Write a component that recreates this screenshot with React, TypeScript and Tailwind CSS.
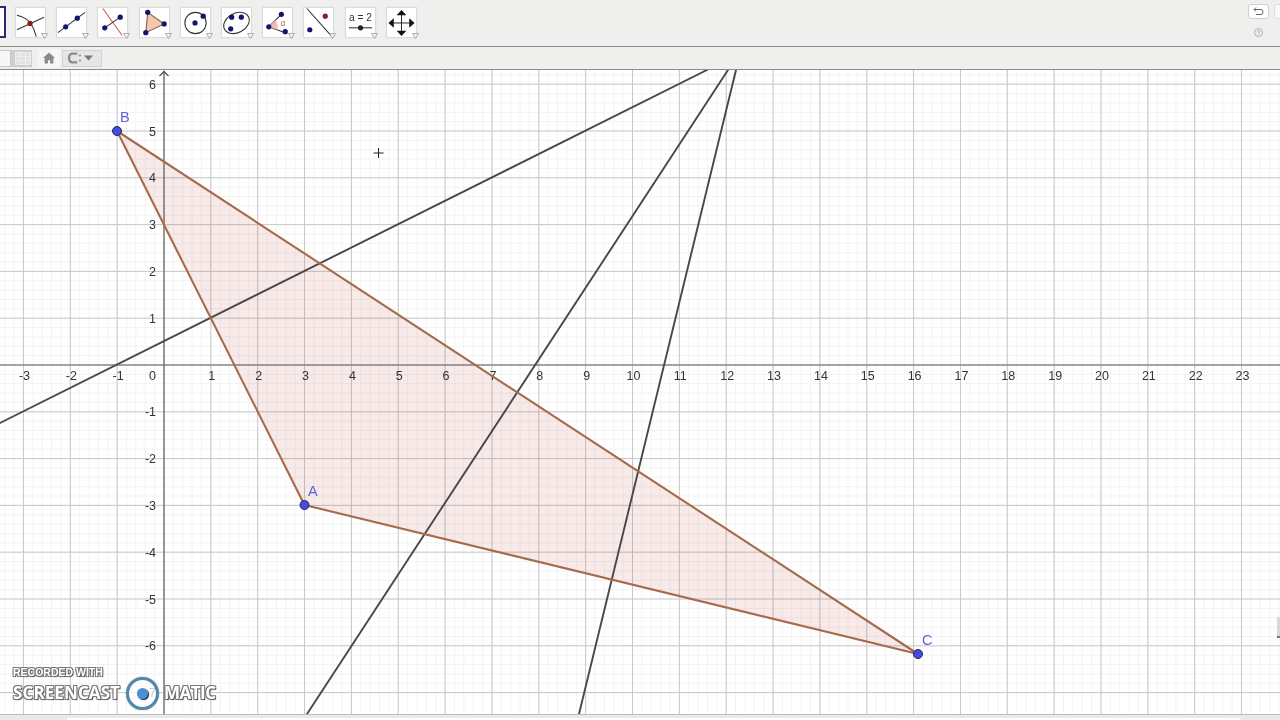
import React from "react";

const UX = 46.85;
const UY = 46.8;
const OX = 164;
const OY = 365;
const range = (a: number, b: number) => Array.from({ length: b - a + 1 }, (_, i) => a + i);
const NAVY = "#14146e";

function Dot({ x, y, c = NAVY, r = 2.7 }: { x: number; y: number; c?: string; r?: number }) {
  return <circle cx={x} cy={y} r={r} fill={c} />;
}

const icons: React.ReactNode[] = [
  <>
    <path d="M1 7 Q10 9 15 15 Q19 21 21 29" stroke="#333" strokeWidth="1.1" fill="none" />
    <path d="M1 22 L29 9" stroke="#333" strokeWidth="1.1" fill="none" />
    <Dot x={14.5} y={15.5} c="#8b1a1a" />
  </>,
  <>
    <path d="M1 25 L29 4" stroke="#333" strokeWidth="1.1" />
    <Dot x={9} y={19} />
    <Dot x={21} y={10} />
  </>,
  <>
    <path d="M5 0 L25 28" stroke="#d9505a" strokeWidth="1.1" />
    <path d="M7 20 L23 9" stroke="#333" strokeWidth="1.1" />
    <Dot x={7} y={20} />
    <Dot x={23} y={9} />
  </>,
  <>
    <path d="M8 4 L25 16 L6 25 Z" fill="#f0c8b4" stroke="#8a5a3a" strokeWidth="1.1" />
    <Dot x={8} y={4} />
    <Dot x={25} y={16} />
    <Dot x={6} y={25} />
  </>,
  <>
    <circle cx="15" cy="15" r="11" stroke="#333" strokeWidth="1.1" fill="none" />
    <Dot x={14.5} y={15} />
    <Dot x={23} y={8} />
  </>,
  <>
    <ellipse cx="15" cy="15" rx="14" ry="10" transform="rotate(-28 15 15)" stroke="#333" strokeWidth="1.1" fill="none" />
    <Dot x={10} y={9} />
    <Dot x={20} y={9} />
    <Dot x={9} y={21} />
  </>,
  <>
    <path d="M6 19 L19 6 M6 19 L23 25" stroke="#333" strokeWidth="1.1" />
    <path d="M6 19 L13 12 Q16 17 15 22 Z" fill="#f5b8b8" />
    <Dot x={6} y={19} />
    <Dot x={19} y={6} />
    <Dot x={23} y={24} />
    <text x="18" y="18" fontSize="9" fill="#d9606a" fontFamily="'Liberation Sans', sans-serif">α</text>
  </>,
  <>
    <path d="M3 0 L28 28" stroke="#333" strokeWidth="1.1" />
    <Dot x={6} y={22} />
    <Dot x={22} y={8} c="#8b1a3a" />
  </>,
  <>
    <text x="15" y="13" textAnchor="middle" fontSize="10.5" fill="#333" fontFamily="'Liberation Sans', sans-serif">a = 2</text>
    <path d="M3 20 L27 20" stroke="#333" strokeWidth="1.1" />
    <Dot x={15} y={20} c="#222" />
  </>,
  <>
    <path d="M15 5 V25 M5 15 H25" stroke="#222" strokeWidth="1" />
    <path d="M15 1.5 L20 7 H10 Z M15 28.5 L20 23 H10 Z M1.5 15 L7 10 V20 Z M28.5 15 L23 10 V20 Z" fill="#111" />
  </>,
];

function Tool({ children }: { children: React.ReactNode }) {
  return (
    <div className="relative w-[29px] h-[29px] bg-white shadow-[0_0_1px_1px_#dcdcdc]">
      <svg width="29" height="29" viewBox="0 0 30 29" className="block">
        {children}
      </svg>
      <svg width="7" height="6" viewBox="0 0 7 6" className="absolute right-[-3px] bottom-[-2px]">
        <path d="M0.5 0.5 H6.5 L3.5 5.5 Z" fill="#f4f4f4" stroke="#9a9a9a" strokeWidth="0.8" />
      </svg>
    </div>
  );
}

function Board() {
  const font = "'Liberation Sans', sans-serif";
  const minorX = range(-20, 130).map((i) => OX + (i * UX) / 5);
  const minorY = range(-35, 35).map((i) => OY + (i * UY) / 5);
  const majorX = range(-4, 25).map((i) => OX + i * UX);
  const majorY = range(-8, 7).map((i) => OY + i * UY);
  const xl = [...range(-3, -1), ...range(1, 23)];
  const yl = [...range(1, 6), ...range(-7, -1)];
  return (
    <svg width="1280" height="644" viewBox="0 70 1280 644" className="block">
      {minorX.map((x) => (
        <line key={x} x1={x} x2={x} y1="70" y2="714" stroke="#f3f3f3" strokeWidth="1" />
      ))}
      {minorY.map((y) => (
        <line key={y} y1={y} y2={y} x1="0" x2="1280" stroke="#f3f3f3" strokeWidth="1" />
      ))}
      {majorX.map((x) => (
        <line key={x} x1={x} x2={x} y1="70" y2="714" stroke="#c8c8c8" strokeWidth="1" />
      ))}
      {majorY.map((y) => (
        <line key={y} y1={y} y2={y} x1="0" x2="1280" stroke="#c8c8c8" strokeWidth="1" />
      ))}
      <path d="M304.5 505 L117 131 L918 654 Z" fill="#b0341c" fillOpacity="0.1" />
      <line x1="0" x2="1280" y1={OY} y2={OY} stroke="#666" strokeWidth="1.2" />
      <line x1={OX} x2={OX} y1="71" y2="714" stroke="#666" strokeWidth="1.2" />
      <path d="M159.5 76 L164 71.5 L168.5 76" stroke="#444" strokeWidth="1.1" fill="none" />
      {xl.map((k) => (
        <text key={k} x={OX + k * UX + 1} y="380" textAnchor="middle" fontSize="12.5" fill="#333" fontFamily={font}>
          {k < 0 ? `-${-k}` : k}
        </text>
      ))}
      <text x="152.5" y="380" textAnchor="middle" fontSize="12.5" fill="#333" fontFamily={font}>0</text>
      {yl.map((k) => (
        <text key={k} x="156" y={OY - k * UY + 4.5} textAnchor="end" fontSize="12.5" fill="#333" fontFamily={font}>
          {k < 0 ? `-${-k}` : k}
        </text>
      ))}
      <g stroke="#484848" strokeWidth="1.9" strokeLinecap="round">
        <line x1="0" y1="423" x2="707" y2="70" />
        <line x1="307" y1="714" x2="728" y2="70" />
        <line x1="579" y1="714" x2="736" y2="70" />
      </g>
      <path d="M304.5 505 L117 131 L918 654 Z" fill="none" stroke="#a66a4c" strokeWidth="2.1" strokeLinejoin="round" />
      {[[304.5, 505], [117, 131], [918, 654]].map(([x, y]) => (
        <circle key={x} cx={x} cy={y} r="4.5" fill="#4a4adf" stroke="#1c2a5a" strokeWidth="1" />
      ))}
      <g fill="#6060e0" fontSize="14.5" fontFamily={font}>
        <text x="308" y="496">A</text>
        <text x="120" y="122">B</text>
        <text x="922" y="645">C</text>
      </g>
      <path d="M378.5 148 V158 M373.5 153 H383.5" stroke="#222" strokeWidth="1" />
    </svg>
  );
}

export default function App() {
  const shadow = "[text-shadow:-1px_-1px_0_#777,1px_-1px_0_#777,-1px_1px_0_#777,1px_1px_1px_#333]";
  return (
    <div className="w-[1280px] h-[720px] flex flex-col overflow-hidden bg-[#efefef] blur-[0.4px] font-['Liberation_Sans',sans-serif]">
      <div className="h-[47px] shrink-0 flex items-start border-b border-[#8c8c8c] bg-[#efefee]">
        <div className="w-[6px] h-[32px] mt-[6px] border-2 border-l-0 border-[#2a2a7a] bg-white shrink-0" />
        <div className="flex gap-[12.2px] ml-[10px] mt-[8px]">
          {icons.map((c, i) => (
            <Tool key={i}>{c}</Tool>
          ))}
        </div>
        <div className="ml-auto flex flex-col items-end pr-[11px] pt-[4px] relative">
          <div className="w-[21px] h-[15px] rounded-[3px] bg-white border border-[#cfcfcf] flex items-center justify-center">
            <svg width="11" height="9" viewBox="0 0 11 9">
              <path d="M1 2.5 H8 Q10 2.5 10 5 Q10 7.5 8 7.5 H3 M3 0.5 L1 2.5 L3 4.5" stroke="#666" strokeWidth="1" fill="none" />
            </svg>
          </div>
          <div className="w-[9px] h-[9px] mt-[9px] mr-[6px] rounded-full border border-[#b0b0b0] text-[7px] leading-[7px] text-center text-[#999]">?</div>
          <div className="absolute right-[-6px] top-[4px] w-[12px] h-[15px] rounded-[3px] bg-[#f8f8f8] border border-[#dcdcdc]" />
        </div>
      </div>
      <div className="h-[23px] shrink-0 flex items-center border-b border-[#8c8c8c] bg-[#efefee]">
        <div className="w-[11px] h-[17px] bg-[#f7f7f7] border border-[#c8c8c8] border-l-0" />
        <div className="w-[21px] h-[17px] bg-[#cfcfcf] flex items-center justify-end pr-[1px]">
          <svg width="16" height="13" viewBox="0 0 16 13">
            <path d="M0.5 0.5 H15.5 V12.5 H0.5 Z M5.5 0 V13 M10.5 0 V13 M0 4.5 H16 M0 8.5 H16" stroke="#eeeeee" strokeWidth="1" fill="#e2e2e2" />
          </svg>
        </div>
        <div className="w-[22px] h-[19px] ml-[6px] bg-[#f6f6f6] flex items-center justify-center">
          <svg width="12" height="12" viewBox="0 0 11 11">
            <path d="M5.5 0.5 L11 5.5 H9.5 V10.5 H6.5 V7.5 H4.5 V10.5 H1.5 V5.5 H0 Z" fill="#8a8a8a" />
          </svg>
        </div>
        <div className="w-[40px] h-[17px] ml-[2px] bg-[#e6e6e6] border border-[#d2d2d2] flex items-center pl-[4px] gap-[1px]">
          <svg width="16" height="12" viewBox="0 0 14 11">
            <path d="M9 1.5 H5 Q1.5 1.5 1.5 5.5 Q1.5 9.5 5 9.5 H9" stroke="#8c8c8c" strokeWidth="2.2" fill="none" />
            <path d="M11.5 2.5 V4 M11.5 7 V8.5" stroke="#8c8c8c" strokeWidth="2" />
          </svg>
          <svg width="9" height="6" viewBox="0 0 9 6">
            <path d="M0 0.5 H9 L4.5 5.5 Z" fill="#777" />
          </svg>
        </div>
      </div>
      <div className="relative h-[644px] shrink-0 bg-white">
        <Board />
        <div className="absolute right-0 top-[547px] w-[3px] h-[21px] bg-[#d8d8d8] border-b-2 border-[#777]" />
        <div className="absolute left-[13px] top-[596px] text-[10.5px] leading-[13px] font-bold text-white whitespace-nowrap">
          <span className={shadow}>RECORDED WITH</span>
        </div>
        <div className="absolute left-[13px] top-[606px] h-[34px] flex items-center text-[17px] font-bold text-white whitespace-nowrap font-['Open_Sans',sans-serif]">
          <span className={`${shadow} w-[113px] tracking-[0.1px]`}>SCREENCAST</span>
          <span className="w-[33px] h-[33px] rounded-full bg-white/75 border-[3px] border-[#4f87ad] flex items-center justify-center shadow-[0_0_1px_#333]">
            <span className="w-[11px] h-[11px] rounded-full bg-[#4a90d9] shadow-[1px_1px_1px_#223]" />
          </span>
          <span className={`${shadow} ml-[5px] tracking-[-0.5px]`}>MATIC</span>
        </div>
      </div>
      <div className="flex-1 bg-[#e9e9e9] border-t border-[#bdbdbd] relative">
        <div className="absolute left-[67px] right-[40px] top-[3px] bottom-0 bg-white" />
      </div>
    </div>
  );
}
